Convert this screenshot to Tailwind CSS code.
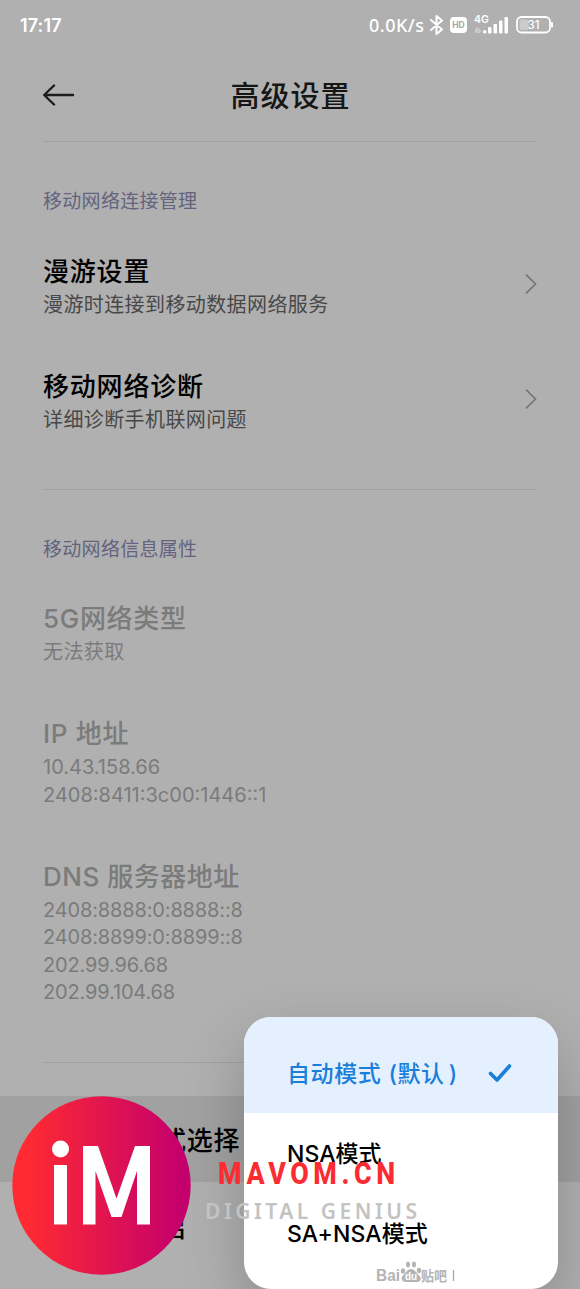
<!DOCTYPE html>
<html lang="zh-CN">
<head>
<meta charset="utf-8">
<title>高级设置</title>
<script src="https://cdn.jsdelivr.net/npm/@tailwindcss/browser@4"></script>
</head>
<body class="bg-[#b0b0b0]">
<div class="relative w-[580px] h-[1289px] overflow-hidden bg-[#b0b0b0] font-['Inter','Noto_Sans_CJK_SC',sans-serif] text-black whitespace-nowrap">
  <!-- Status bar -->
  <div class="h-[50px] pl-5 pr-[27px] flex items-center justify-between text-white">
    <span class="text-[18px] font-semibold tracking-[0.1px] font-['Inter',sans-serif]">17:17</span>
    <div class="flex items-center">
      <span class="text-[18px] font-medium tracking-[0.5px] font-['Noto_Sans',sans-serif] w-[60px]">0.0K/s</span>
      <svg class="w-[16px] h-[22px]" viewBox="0 0 16 22" fill="none" stroke="#fff" stroke-width="2" stroke-linejoin="round" stroke-linecap="round"><path d="M2 6 L13 15.500 L7.500 20 V2 L13 6.500 L2 16"/></svg>
      <svg class="ml-[5px] w-[17px] h-[16px]" viewBox="0 0 17 16"><rect width="17" height="16" rx="4" fill="#fff"/><text x="8.500" y="11.300" text-anchor="middle" font-family="Inter" font-size="8.500" font-weight="700" fill="#a6a6a6">HD</text></svg>
      <svg class="ml-[7px] w-[36px] h-[24px]" viewBox="0 0 36 24" fill="#fff"><text x="0" y="9.500" font-family="Inter" font-size="10.500" font-weight="600">4G</text><path d="M1 20 L3 14.500 V20 M5 15 V20 L7 17" fill="none" stroke="#d8d8d8" stroke-width="1"/><rect x="9" y="17" width="3.500" height="3.500" rx="1.500"/><rect x="14" y="14" width="3.500" height="6.500" rx="1"/><rect x="19.500" y="11" width="3.500" height="9.500" rx="1"/><rect x="25" y="7.500" width="3.500" height="13" rx="1"/><rect x="30.500" y="4" width="3.500" height="16.500" rx="1"/></svg>
      <svg class="ml-[6px] mb-px w-[37px] h-[18px]" viewBox="0 0 37 18"><rect x="1" y="1" width="33" height="15.500" rx="4.500" fill="none" stroke="#fff" stroke-width="1.800"/><rect x="3.500" y="3.500" width="9" height="10.500" rx="2" fill="#cbcbcb"/><rect x="35" y="6" width="2" height="5.500" rx="1" fill="#fff"/><text x="17.500" y="13" text-anchor="middle" font-family="Inter" font-size="11.500" font-weight="500" fill="#fff">31</text></svg>
    </div>
  </div>

  <!-- Title bar -->
  <header class="mx-[43px] h-[92px] border-b border-[#9f9f9f] grid grid-cols-[1fr_auto_1fr] items-center">
    <svg class="w-[32px] h-[24px] mb-[2px]" viewBox="0 0 32 24" fill="none" stroke="#1c1c1c" stroke-width="2.400" stroke-linecap="round" stroke-linejoin="round"><path d="M30 12 H1.500 M11 2.500 L1.200 12 L11 21.500"/></svg>
    <h1 class="mt-[3px] text-[29px] leading-[40px] tracking-[1px] font-medium text-[#161616] ml-px">高级设置</h1>
  </header>

  <section class="mx-[43px] border-b border-[#9f9f9f] pb-[29px]">
    <h2 class="pt-[44px] h-[87px] leading-[32px] text-[19px] tracking-[0.3px] text-[#63637f]">移动网络连接管理</h2>
    <div class="py-[25px] flex items-center justify-between">
      <div>
        <div class="text-[26px] leading-[36px] tracking-[0.8px] font-medium">漫游设置</div>
        <div class="mt-[2px] text-[20px] leading-[27.4px] tracking-[0.4px] text-[#484848]">漫游时连接到移动数据网络服务</div>
      </div>
      <svg class="w-[12px] h-[20px] mb-[6px]" viewBox="0 0 12 20" fill="none" stroke="#747474" stroke-width="1.600"><path d="M1 0.600 L10.500 10 L1 19.400"/></svg>
    </div>
    <div class="py-[25px] flex items-center justify-between">
      <div>
        <div class="text-[26px] leading-[36px] tracking-[0.8px] font-medium">移动网络诊断</div>
        <div class="mt-[2px] text-[20px] leading-[27.4px] tracking-[0.4px] text-[#484848]">详细诊断手机联网问题</div>
      </div>
      <svg class="w-[12px] h-[20px] mb-[6px]" viewBox="0 0 12 20" fill="none" stroke="#747474" stroke-width="1.600"><path d="M1 0.600 L10.500 10 L1 19.400"/></svg>
    </div>
  </section>

  <section class="mx-[43px] border-b border-[#9f9f9f] pb-[30px] text-[#7b7b7b]">
    <h2 class="pt-[44px] h-[86px] leading-[32px] text-[19px] tracking-[0.3px] text-[#63637f]">移动网络信息属性</h2>
    <div class="py-[25px]">
      <div class="text-[26px] leading-[36px] tracking-[0.7px] font-medium">5G网络类型</div>
      <div class="mt-[2px] text-[20px] leading-[27.4px] tracking-[0.4px]">无法获取</div>
    </div>
    <div class="py-[25px]">
      <div class="text-[26px] leading-[36px] tracking-[0.7px] font-medium">IP 地址</div>
      <div class="mt-[2px] text-[20px] leading-[27.4px] tracking-[0px]">10.43.158.66<br>2408:8411:3c00:1446::1</div>
    </div>
    <div class="py-[25px]">
      <div class="text-[26px] leading-[36px] tracking-[0.5px] font-medium">DNS 服务器地址</div>
      <div class="mt-[2px] text-[20px] leading-[27.4px] tracking-[-0.15px]">2408:8888:0:8888::8<br>2408:8899:0:8899::8<br>202.99.96.68<br>202.99.104.68</div>
    </div>
  </section>

  <div class="mt-[33px] h-[86px] bg-[#a1a1a1] pl-[43px] pt-[4px] flex items-center text-[26px] tracking-[0.7px] font-medium">5G网络模式选择</div>
  <div class="h-[86px] pl-[43px] pt-[6px] flex items-center text-[26px] tracking-[0.7px] font-medium">5G网络开启</div>

  <!-- Mode popup -->
  <div class="absolute left-[244px] top-[1017px] w-[314px] h-[272px] rounded-[27px] bg-white overflow-hidden shadow-[0_25px_60px_rgba(0,0,0,0.22)] text-[23px] font-medium">
    <div class="h-[96px] bg-[#e4f0fe] text-[#1a7edb] pl-[43px] pr-[46px] pt-[16px] flex items-center justify-between">
      <span class="pt-[2px] tracking-[0.6px]">自动模式<span class="ml-[7px]">(</span>默认<span class="ml-[4px]">)</span></span>
      <svg class="w-[24px] h-[20px]" viewBox="0 0 24 20" fill="none" stroke="#1a7edb" stroke-width="3.600" stroke-linecap="round" stroke-linejoin="round"><path d="M2.500 10.500 L9 17 L21.500 3"/></svg>
    </div>
    <div class="h-[80px] pl-[43px] pt-[2px] flex items-center">NSA模式</div>
    <div class="h-[80px] pl-[43px] pt-[2px] flex items-center tracking-[0.1px]">SA+NSA模式</div>
  </div>

  <!-- Site badge -->
  <svg class="absolute left-[12px] top-[1096px] w-[179px] h-[179px]" viewBox="0 0 179 179">
    <defs><linearGradient id="g" x1="0" x2="1"><stop offset="0.08" stop-color="#ff2a32"/><stop offset="0.95" stop-color="#c4006c"/></linearGradient></defs>
    <circle cx="89.500" cy="89.500" r="89.200" fill="url(#g)"/>
    <g fill="#fff"><circle cx="48.500" cy="53" r="8.500"/><rect x="42" y="69" width="13" height="59.500"/>
    <path d="M71 128.500V50H86L104.500 102.500L123 50H138V128.500H125V75L109.500 121H99.500L83.500 75V128.500Z"/></g>
  </svg>
  <svg class="absolute left-[200px] top-[1150px] w-[225px] h-[76px]" viewBox="0 0 225 76">
    <g transform="translate(18 0) scale(0.84 1)"><text x="0" y="34.500" font-family="Roboto" font-weight="800" font-size="32" fill="#fb2c31" textLength="211" lengthAdjust="spacing">MAVOM.CN</text></g>
    <text x="5" y="69" font-family="Noto Sans" font-weight="600" font-size="21" fill="#c3c3c3" textLength="212" lengthAdjust="spacing">DIGITAL GENIUS</text>
  </svg>

  <!-- Tieba mark -->
  <svg class="absolute left-[374px] top-[1258px] w-[84px] h-[28px]" viewBox="0 0 84 28">
    <g fill="#b4b4b4" font-weight="700">
      <text x="2" y="23" font-family="Liberation Sans" font-size="16" textLength="24" lengthAdjust="spacingAndGlyphs">Bai</text>
      <ellipse cx="29" cy="13" rx="2.200" ry="2.800"/><ellipse cx="34" cy="6.500" rx="2" ry="3"/><ellipse cx="40" cy="6.500" rx="2" ry="3"/><ellipse cx="45" cy="12.500" rx="2.200" ry="2.800"/>
      <path d="M37 11C33 11 32 15 29 17.500C26 20.500 28 24 32 24H43C47 24 48 20 45 17.500C42 15 41 11 37 11Z"/>
      <text x="31" y="22" font-family="Liberation Sans" font-size="10" fill="#fff">du</text>
      <text x="47" y="22.500" font-family="Noto Sans CJK SC" font-size="14" textLength="26" lengthAdjust="spacingAndGlyphs">贴吧</text>
    </g>
    <path d="M79.500 12V23" stroke="#aaa" stroke-width="1.300"/>
  </svg>
</div>
</body>
</html>
